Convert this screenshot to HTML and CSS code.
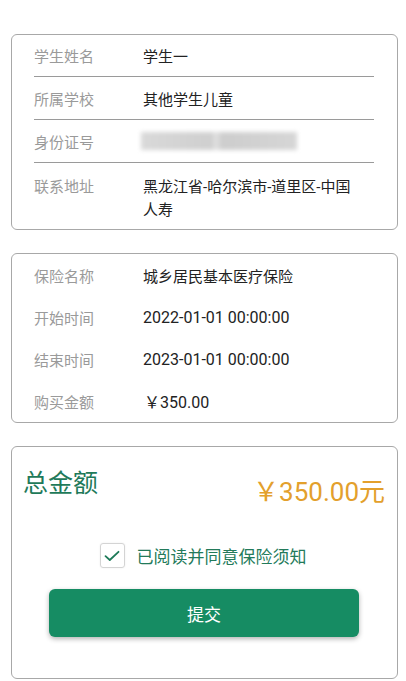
FILE: index.html
```html
<!DOCTYPE html>
<html lang="zh-CN">
<head>
<meta charset="utf-8">
<title>提交</title>
<link rel="stylesheet" href="styles.css">
</head>
<body>
<div class="page">
  <section class="card card-info">
    <div class="row sep">
      <span class="label">学生姓名</span><span class="value">学生一</span>
    </div>
    <div class="row sep">
      <span class="label">所属学校</span><span class="value">其他学生儿童</span>
    </div>
    <div class="row sep">
      <span class="label">身份证号</span><span class="value"><span class="blurred"></span></span>
    </div>
    <div class="row multi">
      <span class="label">联系地址</span><span class="value">黑龙江省-哈尔滨市-道里区-中国<br>人寿</span>
    </div>
  </section>

  <section class="card card-policy">
    <div class="row plain">
      <span class="label">保险名称</span><span class="value">城乡居民基本医疗保险</span>
    </div>
    <div class="row plain">
      <span class="label">开始时间</span><span class="value num">2022-01-01 00:00:00</span>
    </div>
    <div class="row plain">
      <span class="label">结束时间</span><span class="value num">2023-01-01 00:00:00</span>
    </div>
    <div class="row plain">
      <span class="label">购买金额</span><span class="value num price">￥350.00</span>
    </div>
  </section>

  <section class="card card-total">
    <div class="total-head">
      <span class="total-label">总金额</span>
      <span class="total-amount">￥350.00元</span>
    </div>
    <label class="agree">
      <span class="checkbox">
        <svg width="16" height="12" viewBox="0 0 16 12"><path d="M1.5 6.2 L5.8 10 L14.5 1.8" fill="none" stroke="#1d7a58" stroke-width="1.8" stroke-linecap="round" stroke-linejoin="round"/></svg>
      </span>
      <span class="agree-text">已阅读并同意保险须知</span>
    </label>
    <button class="submit" type="button">提交</button>
  </section>
</div>
</body>
</html>
```

FILE: styles.css
```css
* { box-sizing: border-box; }
html, body { margin: 0; padding: 0; background: #fff; }
body {
  font-family: Roboto, "Noto Sans CJK SC", "Noto Sans", sans-serif;
  color: #222;
}
.page {
  padding: 34px 8px 0 11px;
  display: flex;
  flex-direction: column;
  gap: 23px;
}
.card {
  border: 1px solid #a8a8a8;
  border-radius: 6px;
  background: #fff;
}
.card-info { padding: 0 23px 0 22px; }
.card-policy { padding: 0 23px 0 22px; }
.row {
  display: flex;
  font-size: 15px;
}
.row.sep {
  height: 43px;
  align-items: center;
  border-bottom: 1px solid #9a9a9a;
}
.row.sep:first-child { height: 42px; }
.row.multi {
  align-items: flex-start;
  padding: 13px 0 7px;
  line-height: 23px;
}
.row.plain {
  height: 42px;
  align-items: center;
}
.label {
  width: 109px;
  flex-shrink: 0;
  color: #9a9a9a;
}
.value { color: #222; }
.num { font-size: 16px; }
.price { padding-left: 1px; }
.blurred {
  display: block;
  width: 156px;
  height: 18px;
  margin-left: -2px;
  background: linear-gradient(90deg, #d9d9d9 0%, #cfcfcf 45%, #e2e2e2 48%, #cdcdcd 52%, #d6d6d6 100%);
  filter: blur(2px);
}
.card-total {
  padding: 25px 12px 41px 11px;
  display: flex;
  flex-direction: column;
}
.total-head {
  display: flex;
  justify-content: space-between;
  align-items: flex-start;
}
.total-label {
  font-size: 25px;
  line-height: 24px;
  color: #1e7a5a;
}
.total-amount {
  margin-top: 7px;
  font-size: 26px;
  line-height: 26px;
  color: #e3a02c;
}
.agree {
  margin-top: 38px;
  align-self: center;
  display: flex;
  align-items: center;
  gap: 12px;
  padding-right: 2px;
}
.checkbox {
  width: 25px;
  height: 25px;
  border: 1px solid #d4d4d4;
  border-radius: 3px;
  display: flex;
  align-items: center;
  justify-content: center;
  box-shadow: 0 0 2px rgba(0,0,0,0.08);
}
.agree-text {
  font-size: 17px;
  color: #237a5a;
}
.submit {
  margin-top: 21px;
  align-self: center;
  width: 310px;
  height: 48px;
  border: 0;
  border-radius: 6px;
  background: #168c63;
  color: #fff;
  font-family: inherit;
  font-size: 17px;
  box-shadow: 0 2px 5px rgba(0,0,0,0.3);
}
```
